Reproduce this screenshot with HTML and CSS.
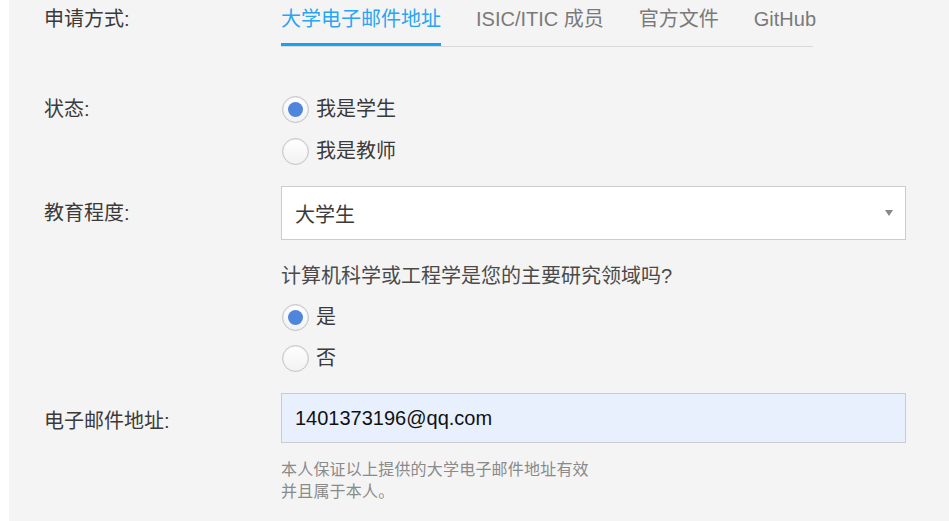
FILE: index.html
```html
<!DOCTYPE html>
<html lang="zh-CN">
<head>
<meta charset="utf-8">
<title>申请</title>
<link rel="stylesheet" href="styles.css">
</head>
<body>
<div class="page">
  <div class="row row-tabs">
    <div class="label">申请方式:</div>
    <div class="tabs">
      <span class="tab active">大学电子邮件地址</span>
      <span class="tab">ISIC/ITIC 成员</span>
      <span class="tab">官方文件</span>
      <span class="tab">GitHub</span>
    </div>
  </div>

  <div class="row row-status">
    <div class="label radio-label">状态:</div>
    <div class="radios">
      <label class="radio"><input type="radio" name="status" checked><span>我是学生</span></label>
      <label class="radio"><input type="radio" name="status"><span>我是教师</span></label>
    </div>
  </div>

  <div class="row row-select">
    <div class="label select-label">教育程度:</div>
    <div class="select">
      <span>大学生</span>
      <span class="arrow"></span>
    </div>
  </div>

  <div class="row row-question">
    <div class="label"></div>
    <div class="radios">
      <div class="question">计算机科学或工程学是您的主要研究领域吗?</div>
      <label class="radio"><input type="radio" name="cs" checked><span>是</span></label>
      <label class="radio"><input type="radio" name="cs"><span>否</span></label>
    </div>
  </div>

  <div class="row row-email">
    <div class="label email-label">电子邮件地址:</div>
    <div class="email-col">
      <div class="input">1401373196@qq.com</div>
      <p class="help">本人保证以上提供的大学电子邮件地址有效<br>并且属于本人。</p>
    </div>
  </div>
</div>
</body>
</html>
```

FILE: styles.css
```css
html, body {
  margin: 0;
  padding: 0;
  background: #ffffff;
}

body {
  font-family: "Liberation Sans", "Noto Sans CJK SC", sans-serif;
  font-size: 20px;
  color: #3a3a3a;
}

.page {
  margin-left: 9px;
  background: #f4f4f4;
  min-height: 521px;
  padding: 7px 0 0 35px;
  box-sizing: border-box;
  overflow: hidden;
}

.row {
  display: flex;
  align-items: flex-start;
}

.label {
  width: 237px;
  flex: none;
  line-height: 24px;
  color: #3a3a3a;
}

/* tabs */
.tabs {
  display: flex;
  width: 532px;
  border-bottom: 1px solid #d9d9d9;
  height: 39px;
}

.tab {
  line-height: 24px;
  padding-bottom: 13px;
  border-bottom: 3px solid transparent;
  margin-right: 35px;
  color: #7a7a7a;
  white-space: nowrap;
}

.tab:last-child {
  margin-right: 0;
}

.tab.active {
  color: #2aa4f4;
  border-bottom-color: #14a2f2;
}

/* radios */
.row-status {
  margin-top: 48px;
}

.radio-label {
  line-height: 28px;
}

.radios {
  display: flex;
  flex-direction: column;
  gap: 14px;
}

.radio {
  display: flex;
  align-items: center;
  height: 28px;
  line-height: 28px;
  color: #3a3a3a;
}

.radio input {
  appearance: none;
  -webkit-appearance: none;
  width: 27px;
  height: 27px;
  margin: 0 7px 0 1px;
  border-radius: 50%;
  border: 1px solid #c4c4c4;
  box-shadow: inset 0 0 0 1px #ececec;
  background: linear-gradient(#ffffff, #f2f2f2);
  box-sizing: border-box;
  position: relative;
  flex: none;
}

.radio input:checked::after {
  content: "";
  position: absolute;
  left: 5px;
  top: 5px;
  width: 15px;
  height: 15px;
  border-radius: 50%;
  background: #4f86db;
}

/* select */
.row-select {
  margin-top: 21px;
}

.select-label {
  line-height: 54px;
}

.select {
  width: 625px;
  height: 54px;
  box-sizing: border-box;
  border: 1px solid #cccccc;
  background: #ffffff;
  display: flex;
  align-items: center;
  justify-content: space-between;
  padding: 0 12px 0 13px;
  color: #3a3a3a;
}

.arrow {
  width: 0;
  height: 0;
  border-left: 4px solid transparent;
  border-right: 4px solid transparent;
  border-top: 6px solid #888888;
}

/* question */
.row-question {
  margin-top: 22px;
}

.row-question .radios {
  gap: 13px;
}

.question {
  line-height: 28px;
  color: #4a4a4a;
}

/* email */
.row-email {
  margin-top: 21px;
}

.email-label {
  line-height: 50px;
  padding-top: 3px;
}

.input {
  width: 625px;
  height: 50px;
  box-sizing: border-box;
  border: 1px solid #cccccc;
  background: #e8f0fe;
  padding-left: 13px;
  line-height: 48px;
  color: #111111;
}

.help {
  margin: 16px 0 0;
  font-size: 16px;
  line-height: 22px;
  letter-spacing: 0.2px;
  color: #8a8a8a;
}
```
